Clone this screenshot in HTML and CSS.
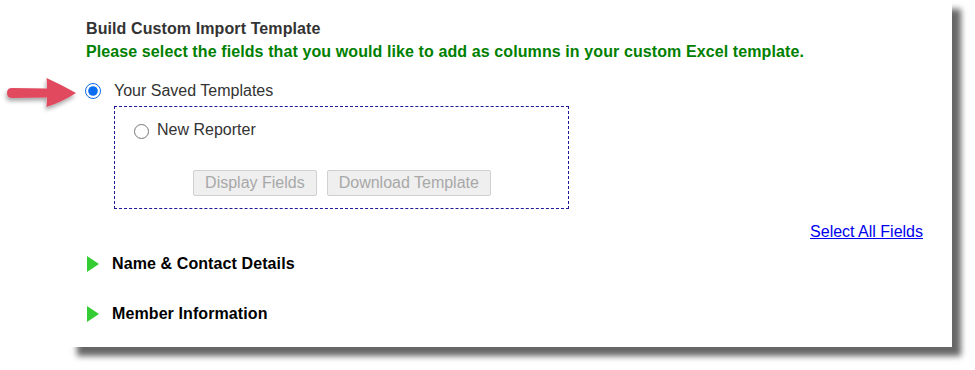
FILE: index.html
```html
<!DOCTYPE html>
<html>
    <head>
        <meta charset="utf-8">
        <title>Build Custom Import Template</title>
        <link rel="stylesheet" href="styles.css">
    </head>
    <body>
        <svg class="pointer-arrow" width="84" height="44" viewBox="0 0 84 44">
            <defs>
                <filter id="arrow-shadow" x="-20%" y="-20%" width="150%" height="160%">
                    <feDropShadow dx="-1" dy="3" stdDeviation="2" flood-color="#000" flood-opacity="0.35"/>
                </filter>
            </defs>
            <path filter="url(#arrow-shadow)" fill="#e14a5f"
                  d="M12 13 L47 13.5 Q47 8 46.5 3 Q62 10 76 18 Q62 27 46.5 32 Q47 27 47 22.5 L12 23 Q7 23 7 18 Q7 13 12 13 Z"/>
        </svg>
        <main class="panel">
            <h1 class="panel-title">Build Custom Import Template</h1>
            <p class="panel-hint">Please select the fields that you would like to add as columns in your custom Excel template.</p>

            <label class="radio-row">
                <input type="radio" name="template-source" checked>
                <span>Your Saved Templates</span>
            </label>

            <section class="saved-templates">
                <label class="radio-row small">
                    <input type="radio" name="saved-template">
                    <span>New Reporter</span>
                </label>
                <div class="template-actions">
                    <button disabled>Display Fields</button>
                    <button disabled>Download Template</button>
                </div>
            </section>

            <div class="select-all">
                <a href="#">Select All Fields</a>
            </div>

            <ul class="field-groups">
                <li><span class="expander"></span>Name &amp; Contact Details</li>
                <li><span class="expander"></span>Member Information</li>
            </ul>
        </main>
    </body>
</html>
```

FILE: styles.css
```css
body {
    margin: 0;
    padding-bottom: 24px;
    background-color: #ffffff;
    font-family: "Liberation Sans", Arial, sans-serif;
    color: #333333;
}

.pointer-arrow {
    position: absolute;
    left: 0;
    top: 75px;
}

.panel {
    margin-left: 68px;
    width: 866px;
    padding: 19px 0 23px 18px;
    background-color: #ffffff;
    box-shadow: 9px 9px 6px rgba(0, 0, 0, 0.6);
}

.panel-title {
    margin: 0;
    font-size: 16px;
    line-height: 20px;
    font-weight: bold;
    letter-spacing: 0.1px;
    color: #333333;
}

.panel-hint {
    margin: 3px 0 0 0;
    font-size: 16px;
    line-height: 20px;
    font-weight: bold;
    letter-spacing: 0.1px;
    color: #008000;
}

.radio-row {
    display: flex;
    align-items: center;
    font-size: 16px;
    line-height: 20px;
    margin-top: 19px;
}

.radio-row input {
    width: 16px;
    height: 16px;
    margin: 0 13px 0 -1px;
    accent-color: #0a6cf0;
}

.radio-row.small {
    margin-top: 0;
}

.radio-row.small input {
    width: 15px;
    height: 15px;
    margin: 2px 8px 0 0;
}

.saved-templates {
    margin: 5px 0 0 28px;
    width: 416px;
    padding: 13px 18px 12px 19px;
    border: 1px dashed #1a1a9a;
}

.template-actions {
    display: flex;
    justify-content: center;
    gap: 10px;
    margin-top: 30px;
}

.template-actions button {
    height: 26px;
    padding: 0 11px;
    font-family: "Liberation Sans", Arial, sans-serif;
    font-size: 16px;
    color: #a8a8a8;
    background-color: #efefef;
    border: 1px solid #d0d0d0;
    border-radius: 2px;
}

.select-all {
    display: flex;
    justify-content: flex-end;
    margin: 13px 29px 0 0;
    font-size: 16px;
    line-height: 20px;
}

.select-all a {
    color: #0000ee;
}

.field-groups {
    list-style: none;
    margin: 12px 0 0 0;
    padding: 0;
}

.field-groups li {
    display: flex;
    align-items: center;
    font-size: 16px;
    line-height: 20px;
    font-weight: bold;
    letter-spacing: 0.1px;
    color: #000000;
    margin-bottom: 30px;
}

.field-groups li:last-child {
    margin-bottom: 0;
}

.expander {
    width: 0;
    height: 0;
    margin: 0 13px 0 1px;
    border-left: 12px solid #33cc33;
    border-top: 8px solid transparent;
    border-bottom: 8px solid transparent;
}
```
